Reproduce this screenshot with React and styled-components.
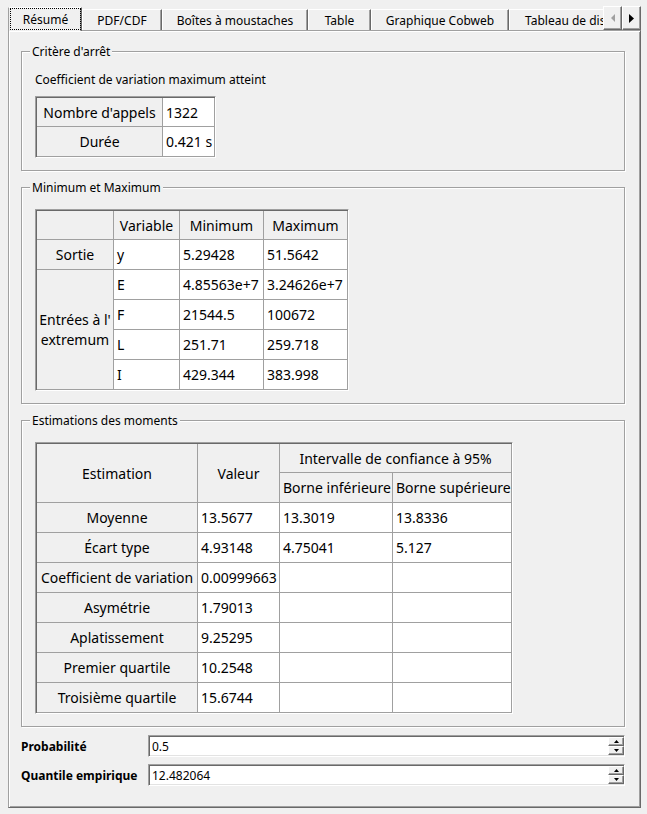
import React from "react";
import styled, { createGlobalStyle } from "styled-components";

const GlobalStyle = createGlobalStyle`
  html, body {
    margin: 0;
    background: #f0f0f0;
  }
  body {
    font-family: "Noto Sans", "Open Sans", sans-serif;
    font-size: 12px;
    color: #000;
  }
  * {
    box-sizing: border-box;
  }
`;

const Page = styled.div`
  width: 647px;
  height: 814px;
  padding: 6px 6px 0 8px;
`;

// tabs
const TabBar = styled.div`
  position: relative;
  z-index: 1;
  display: flex;
  align-items: flex-end;
  height: 25px;
  margin-bottom: -1px;
  overflow: hidden;
`;

const Tab = styled.div`
  flex: none;
  display: flex;
  width: ${p => (p.$w ? `${p.$w}px` : "auto")};
  height: ${p => (p.$active ? 24 : 21)}px;
  margin-bottom: ${p => (p.$active ? 0 : 1)}px;
  padding: ${p => (p.$w ? "0" : "0 14px")};
  background: #f0f0f0;
  border-top: 1px solid #fff;
  border-left: 1px solid ${p => (p.$active ? "#a0a0a0" : "#fff")};
  border-right: 1px solid #696969;
  box-shadow: inset -1px 0 0 #a0a0a0;
  white-space: nowrap;
`;

const TabLabel = styled.span`
  flex: 1;
  display: flex;
  align-items: center;
  justify-content: center;
  margin: ${p => (p.$active ? "0 0 1px 1px" : "0")};
  border: 1px dotted ${p => (p.$active ? "#000" : "transparent")};
`;

const TabScroller = styled.div`
  position: absolute;
  top: 0;
  right: 0;
  display: flex;
  height: 24px;
`;

const RaisedButton = styled.div`
  display: flex;
  align-items: center;
  justify-content: center;
  background: #f0f0f0;
  border: 1px solid;
  border-color: #fff #696969 #696969 #fff;
  box-shadow: inset -1px -1px 0 #a0a0a0;
`;

const ScrollButton = styled(RaisedButton)`
  width: 19px;
  height: 24px;
`;

// panel
const Panel = styled.div`
  border: 1px solid;
  border-color: #a0a0a0 #696969 #696969 #a0a0a0;
  box-shadow: inset 1px 1px 0 #fff, inset -1px -1px 0 #a0a0a0;
  padding: 20px 15px 21px 12px;
`;

const Group = styled.section`
  position: relative;
  border: 1px solid #a0a0a0;
  box-shadow: inset 1px 1px 0 #fff, 1px 1px 0 #fff;
  padding: ${p => p.$pt}px 12px 12px 13px;
  & + & {
    margin-top: 16px;
  }
`;

const Legend = styled.span`
  position: absolute;
  top: -8px;
  left: 8px;
  padding: 0 2px;
  line-height: 16px;
  background: #f0f0f0;
`;

const Note = styled.div`
  line-height: 16px;
  margin-bottom: 8px;
`;

const Frame = styled.div`
  width: fit-content;
  border: 1px solid;
  border-color: #a0a0a0 #fff #fff #a0a0a0;
`;

const Grid = styled.table`
  table-layout: fixed;
  width: ${p => p.$w}px;
  border-collapse: separate;
  border-spacing: 0;
  border-top: 1px solid #696969;
  border-left: 1px solid #696969;
  font-size: 14px;

  tr > * {
    box-sizing: border-box;
    height: 30px;
    padding: 0 3px;
    border-right: 1px solid #a0a0a0;
    border-bottom: 1px solid #a0a0a0;
    vertical-align: middle;
    white-space: nowrap;
    overflow: hidden;
  }
  tr:first-child > * {
    height: 29px;
  }
`;

const Col = styled.col`
  width: ${p => p.$w}px;
`;

const HeadCell = styled.th`
  font-weight: normal;
  text-align: center;
  background: #f0f0f0;
  && {
    white-space: ${p => (p.$wrap ? "normal" : "nowrap")};
    line-height: ${p => (p.$wrap ? "20px" : "normal")};
    padding: ${p => (p.$wrap ? "0 2px" : "0 3px")};
  }
`;

const Cell = styled.td`
  text-align: left;
  background: #fff;
`;

// bottom fields
const FieldRow = styled.div`
  display: grid;
  grid-template-columns: 127px 1fr;
  align-items: center;
  height: 22px;
  margin-top: ${p => p.$mt}px;
`;

const Label = styled.span`
  font-weight: bold;
  white-space: nowrap;
`;

const SpinBox = styled.div`
  display: flex;
  height: 22px;
  background: #fff;
  border: 1px solid;
  border-color: #a0a0a0 #fff #fff #a0a0a0;
  box-shadow: inset 1px 1px 0 #696969, inset -1px -1px 0 #e3e3e3;
`;

const SpinValue = styled.span`
  flex: 1;
  display: flex;
  align-items: center;
  padding-left: 3px;
`;

const SpinButtons = styled.div`
  display: flex;
  flex-direction: column;
  width: 16px;
  margin: 1px 0;
`;

const SpinButton = styled(RaisedButton)`
  flex: 1;
`;

const Tri = ({ dir, color = "#000", w = 5, h = 3 }) => {
  const pts = {
    up: `0,${h} ${w},${h} ${w / 2},0`,
    down: `0,0 ${w},0 ${w / 2},${h}`,
    left: `${w},0 ${w},${h} 0,${h / 2}`,
    right: `0,0 0,${h} ${w},${h / 2}`,
  }[dir];
  return (
    <svg width={w} height={h} viewBox={`0 0 ${w} ${h}`}>
      <polygon points={pts} fill={color} />
    </svg>
  );
};

const Spin = ({ value }) => (
  <SpinBox>
    <SpinValue>{value}</SpinValue>
    <SpinButtons>
      <SpinButton><Tri dir="up" /></SpinButton>
      <SpinButton><Tri dir="down" /></SpinButton>
    </SpinButtons>
  </SpinBox>
);

const tabs = [
  { label: "Résumé", w: 74, active: true },
  { label: "PDF/CDF", w: 80 },
  { label: "Boîtes à moustaches", w: 146 },
  { label: "Table", w: 63 },
  { label: "Graphique Cobweb", w: 138 },
  { label: "Tableau de dispersion" },
];

const extremes = [
  ["E", "4.85563e+7", "3.24626e+7"],
  ["F", "21544.5", "100672"],
  ["L", "251.71", "259.718"],
  ["I", "429.344", "383.998"],
];

const moments = [
  ["Moyenne", "13.5677", "13.3019", "13.8336"],
  ["Écart type", "4.93148", "4.75041", "5.127"],
  ["Coefficient de variation", "0.00999663", "", ""],
  ["Asymétrie", "1.79013", "", ""],
  ["Aplatissement", "9.25295", "", ""],
  ["Premier quartile", "10.2548", "", ""],
  ["Troisième quartile", "15.6744", "", ""],
];

const App = () => {
  return (
    <Page>
      <GlobalStyle />
      <TabBar>
        {tabs.map(t => (
          <Tab key={t.label} $w={t.w} $active={t.active}>
            <TabLabel $active={t.active}>{t.label}</TabLabel>
          </Tab>
        ))}
        <TabScroller>
          <ScrollButton><Tri dir="left" color="#a0a0a0" w={4} h={8} /></ScrollButton>
          <ScrollButton><Tri dir="right" w={5} h={9} /></ScrollButton>
        </TabScroller>
      </TabBar>

      <Panel>
        <Group $pt={20}>
          <Legend>Critère d'arrêt</Legend>
          <Note>Coefficient de variation maximum atteint</Note>
          <Frame>
            <Grid $w={179}>
              <colgroup>
                <Col $w={126} />
                <Col $w={52} />
              </colgroup>
              <tbody>
                <tr>
                  <HeadCell>Nombre d'appels</HeadCell>
                  <Cell>1322</Cell>
                </tr>
                <tr>
                  <HeadCell>Durée</HeadCell>
                  <Cell>0.421 s</Cell>
                </tr>
              </tbody>
            </Grid>
          </Frame>
        </Group>

        <Group $pt={21}>
          <Legend>Minimum et Maximum</Legend>
          <Frame>
            <Grid $w={312}>
              <colgroup>
                <Col $w={77} />
                <Col $w={66} />
                <Col $w={84} />
                <Col $w={84} />
              </colgroup>
              <tbody>
                <tr>
                  <HeadCell />
                  <HeadCell>Variable</HeadCell>
                  <HeadCell>Minimum</HeadCell>
                  <HeadCell>Maximum</HeadCell>
                </tr>
                <tr>
                  <HeadCell>Sortie</HeadCell>
                  <Cell>y</Cell>
                  <Cell>5.29428</Cell>
                  <Cell>51.5642</Cell>
                </tr>
                {extremes.map((r, i) => (
                  <tr key={r[0]}>
                    {i === 0 && (
                      <HeadCell rowSpan={4} $wrap>
                        Entrées à l' extremum
                      </HeadCell>
                    )}
                    {r.map((v, j) => (
                      <Cell key={j}>{v}</Cell>
                    ))}
                  </tr>
                ))}
              </tbody>
            </Grid>
          </Frame>
        </Group>

        <Group $pt={21}>
          <Legend>Estimations des moments</Legend>
          <Frame>
            <Grid $w={476}>
              <colgroup>
                <Col $w={161} />
                <Col $w={82} />
                <Col $w={113} />
                <Col $w={119} />
              </colgroup>
              <tbody>
                <tr>
                  <HeadCell rowSpan={2}>Estimation</HeadCell>
                  <HeadCell rowSpan={2}>Valeur</HeadCell>
                  <HeadCell colSpan={2}>Intervalle de confiance à 95%</HeadCell>
                </tr>
                <tr>
                  <HeadCell>Borne inférieure</HeadCell>
                  <HeadCell>Borne supérieure</HeadCell>
                </tr>
                {moments.map(r => (
                  <tr key={r[0]}>
                    <HeadCell>{r[0]}</HeadCell>
                    <Cell>{r[1]}</Cell>
                    <Cell>{r[2]}</Cell>
                    <Cell>{r[3]}</Cell>
                  </tr>
                ))}
              </tbody>
            </Grid>
          </Frame>
        </Group>

        <FieldRow $mt={8}>
          <Label>Probabilité</Label>
          <Spin value="0.5" />
        </FieldRow>
        <FieldRow $mt={7}>
          <Label>Quantile empirique</Label>
          <Spin value="12.482064" />
        </FieldRow>
      </Panel>
    </Page>
  );
};

export default App;
